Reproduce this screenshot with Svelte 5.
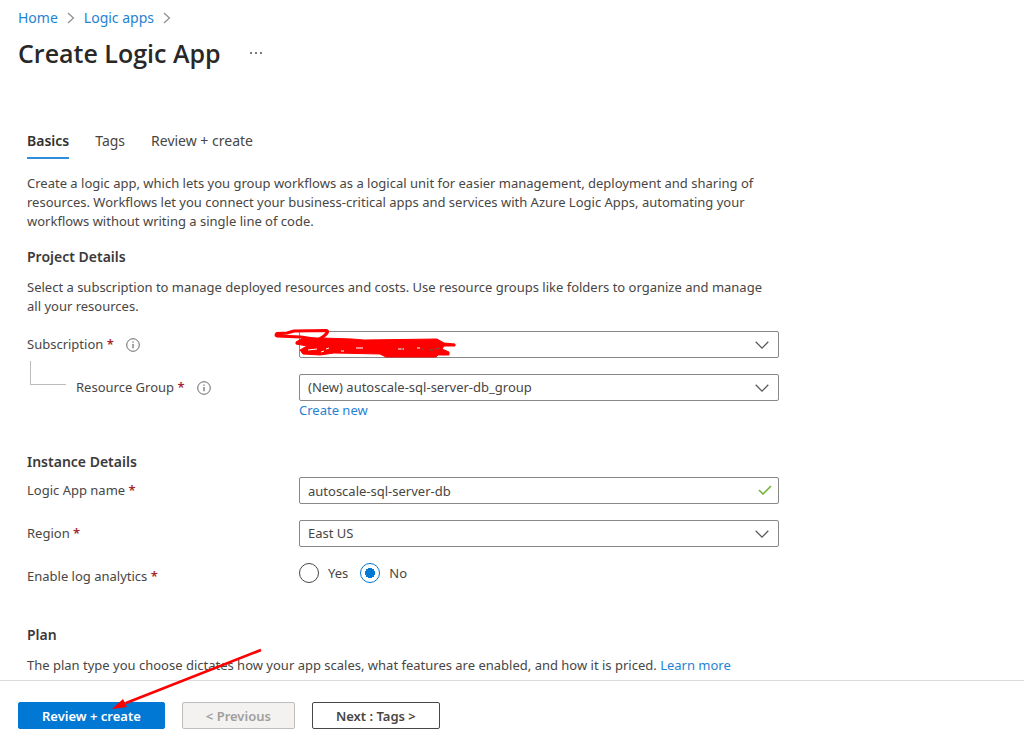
<script lang="ts">
  interface Field {
    id: string
    label: string
    options: string[]
  }

  const tabs = ['Basics', 'Tags', 'Review + create']
  const crumbs = ['Home', 'Logic apps']

  const subscription: Field = { id: 'subscription', label: 'Subscription', options: [''] }
  const group: Field = {
    id: 'resource-group',
    label: 'Resource Group',
    options: ['(New) autoscale-sql-server-db_group'],
  }
  const region: Field = { id: 'region', label: 'Region', options: ['East US'] }

  let activeTab = $state('Basics')
  let name = $state('autoscale-sql-server-db')
  let analytics = $state('No')
</script>

{#snippet info(label: string)}
  <button class="info" type="button" aria-label="About {label}">
    <svg viewBox="0 0 14 14" width="14" height="14" aria-hidden="true">
      <circle cx="7" cy="7" r="6.3" fill="none" stroke="currentColor" />
      <path d="M7 6v4.2M7 3.6v1.2" stroke="currentColor" stroke-width="1.2" />
    </svg>
  </button>
{/snippet}

{#snippet dropdown(field: Field)}
  <select id={field.id}>
    {#each field.options as option}
      <option>{option}</option>
    {/each}
  </select>
  <svg class="chevron" viewBox="0 0 14 8" width="14" height="8" aria-hidden="true">
    <path d="M.7.8 7 7.1 13.3.8" fill="none" stroke="#5c5a58" stroke-width="1.3" />
  </svg>
{/snippet}

<div class="page">
  <header>
    <nav class="crumbs" aria-label="Breadcrumb">
      {#each crumbs as crumb}
        <a href="#top">{crumb}</a>
        <svg viewBox="0 0 8 12" width="8" height="12" aria-hidden="true">
          <path d="M1 1l5.500 5L1 11" fill="none" stroke="#8a8886" stroke-width="1.1" />
        </svg>
      {/each}
    </nav>
    <div class="heading">
      <h1>Create Logic App</h1>
      <button class="more" type="button" aria-label="More actions">
        <svg viewBox="0 0 12 2" width="12" height="2" aria-hidden="true">
          <path d="M0 0h2v2H0zM5 0h2v2H5zM10 0h2v2h-2z" fill="#7a7876" />
        </svg>
      </button>
    </div>
  </header>

  <main>
    <div class="tabs" role="tablist">
      {#each tabs as tab}
        <button
          type="button"
          role="tab"
          aria-selected={tab === activeTab}
          class:active={tab === activeTab}
          onclick={() => (activeTab = tab)}
        >{tab}</button>
      {/each}
    </div>

    <p>
      Create a logic app, which lets you group workflows as a logical unit for easier management,
      deployment and sharing of resources. Workflows let you connect your business-critical apps and
      services with Azure Logic Apps, automating your workflows without writing a single line of code.
    </p>

    <section>
      <h2>Project Details</h2>
      <p>
        Select a subscription to manage deployed resources and costs. Use resource groups like folders
        to organize and manage all your resources.
      </p>
      <div class="fields">
        <div class="row">
          <div class="label">
            <label for={subscription.id}>{subscription.label} <b>*</b></label>
            {@render info(subscription.label)}
          </div>
          <div class="control">
            {@render dropdown(subscription)}
            <svg class="scribble" viewBox="0 0 182 32" width="182" height="32" aria-hidden="true">
              <path
                d="M46 12 27 9 3 8Q1 7 3 5.5L13 5 20 3 52 2.500Q56 3 50 8L44 12"
                fill="none" stroke="#fe0000" stroke-width="3" stroke-linejoin="round"
              />
              <path
                d="M22 14 29 10 48 10 78 11 90 12 163 11 170 15 181 16 181 18 170 18 168 21 175 24 175 27 164 27 162 29 112 29 106 26 60 25 46 27 29 26 26 22 33 18 22 16z"
                fill="#fe0000" stroke="#fe0000" stroke-linejoin="round"
              />
              <path d="M34 22l9-1M47 24l3-1M52 21l3-1M67 23h3M82 20h7M124 21h6M143 20h3" stroke="#fff" />
              <path d="M127 21h2M148 21h2M156 22h3M161 21l5-1" stroke="#605e5c" />
            </svg>
          </div>
        </div>
        <div class="row">
          <div class="label nested">
            <label for={group.id}>{group.label} <b>*</b></label>
            {@render info(group.label)}
          </div>
          <div class="control">
            {@render dropdown(group)}
            <a href="#create">Create new</a>
          </div>
        </div>
      </div>
    </section>

    <section class="instance">
      <h2>Instance Details</h2>
      <div class="fields">
        <div class="row">
          <div class="label"><label for="app-name">Logic App name <b>*</b></label></div>
          <div class="control">
            <input id="app-name" type="text" bind:value={name} />
            <svg class="check" viewBox="0 0 14 10" width="14" height="10" aria-hidden="true">
              <path d="M1 5l4 4L13 1" fill="none" stroke="#6bb12c" stroke-width="1.5" />
            </svg>
          </div>
        </div>
        <div class="row">
          <div class="label"><label for={region.id}>{region.label} <b>*</b></label></div>
          <div class="control">{@render dropdown(region)}</div>
        </div>
        <div class="row">
          <div class="label" id="analytics-label"><span>Enable log analytics <b>*</b></span></div>
          <div class="radios" role="radiogroup" aria-labelledby="analytics-label">
            {#each ['Yes', 'No'] as choice}
              <label>
                <input type="radio" name="analytics" value={choice} bind:group={analytics} />
                {choice}
              </label>
            {/each}
          </div>
        </div>
      </div>
    </section>

    <section class="plan">
      <h2>Plan</h2>
      <p>
        The plan type you choose dictates how your app scales, what features are enabled, and how it is
        priced. <a href="#learn">Learn more</a>
      </p>
    </section>
  </main>

  <footer>
    <button class="primary" type="button">Review + create</button>
    <button type="button" disabled>&lt; Previous</button>
    <button type="button">Next : Tags &gt;</button>
    <svg class="arrow" viewBox="0 0 150 62" width="150" height="62" aria-hidden="true">
      <path d="M149 2 14 55" fill="none" stroke="#fe0000" stroke-width="2.6" />
      <path d="M0 61 11 51 15 59z" fill="#fe0000" />
    </svg>
  </footer>
</div>

<style>
  :global(body) {
    margin: 0;
    background: #fff;
  }

  .page {
    display: flex;
    flex-direction: column;
    min-height: 100vh;
    font-family: 'Noto Sans', 'Open Sans', sans-serif;
    font-size: 13px;
    line-height: 19px;
    color: #484644;
  }

  button,
  input,
  select {
    font: inherit;
    color: inherit;
  }

  a {
    color: #1f83d3;
    text-decoration: none;
  }

  header {
    padding: 8px 18px 0;
  }

  .crumbs {
    display: flex;
    align-items: center;
    gap: 9px;
    font-size: 14px;
    line-height: 20px;
  }

  .heading {
    display: flex;
    align-items: center;
    gap: 29px;
    margin-top: 7px;
  }

  h1 {
    margin: 0;
    font-family: 'Open Sans', 'Noto Sans', sans-serif;
    font-size: 25px;
    line-height: 36px;
    font-weight: 600;
    color: #292827;
  }

  .more,
  .info {
    display: flex;
    padding: 0;
    border: 0;
    background: none;
  }

  .info {
    color: #6a6866;
  }

  main {
    max-width: 752px;
    padding: 60px 27px 0;
  }

  .tabs {
    display: flex;
    gap: 26px;
    margin-bottom: 15px;

    & button {
      padding: 0 0 6px;
      border: 0;
      border-bottom: 2px solid transparent;
      background: none;
      font-size: 14px;
      line-height: 20px;
    }

    & .active {
      border-color: #2f8fdb;
      font-weight: 600;
      color: #323130;
    }
  }

  p {
    margin: 0;
  }

  h2 {
    margin: 16px 0 11px;
    font-size: 14px;
    line-height: 20px;
    font-weight: 600;
    color: #3b3a39;
  }

  .fields {
    display: flex;
    flex-direction: column;
    gap: 16px;
  }

  p + .fields {
    margin-top: 15px;
  }

  .row {
    display: grid;
    grid-template-columns: 272px 1fr;
    min-height: 27px;
  }

  .label {
    display: flex;
    align-items: center;
    gap: 12px;
    height: 27px;

    & b {
      font-weight: 600;
      color: #a4262c;
    }
  }

  .nested {
    position: relative;
    padding-left: 49px;

    &::before {
      content: '';
      position: absolute;
      left: 3px;
      bottom: 16px;
      width: 36px;
      height: 24px;
      box-sizing: border-box;
      border: solid #bebcba;
      border-width: 0 0 1px 1px;
    }
  }

  .control {
    position: relative;
  }

  select,
  input[type='text'] {
    display: block;
    box-sizing: border-box;
    width: 100%;
    height: 27px;
    padding: 0 30px 0 8px;
    border: 1px solid #8a8886;
    border-radius: 2px;
    background: #fff;
    appearance: none;
  }

  .chevron,
  .check {
    position: absolute;
    right: 10px;
    top: 10px;
    pointer-events: none;
  }

  .check {
    right: 7px;
    top: 8px;
  }

  .scribble {
    position: absolute;
    left: -25px;
    top: -3px;
    pointer-events: none;
  }

  .instance h2 {
    margin: 32px 0 5px;
  }

  .radios {
    display: flex;
    align-items: flex-start;
    gap: 12px;

    & label {
      display: flex;
      align-items: center;
      gap: 9px;
    }

    & input {
      box-sizing: border-box;
      width: 20px;
      height: 20px;
      margin: 0;
      border: 1px solid #484644;
      border-radius: 50%;
      appearance: none;
    }

    & input:checked {
      border-color: #0078d4;
      background: radial-gradient(circle, #0078d4 5px, transparent 5px);
    }
  }

  .plan h2 {
    margin: 35px 0 11px;
  }

  footer {
    position: relative;
    display: flex;
    gap: 17px;
    margin-top: auto;
    padding: 21px 18px 19px;
    border-top: 1px solid #dddbd9;

    & button {
      height: 27px;
      padding: 0 23px;
      border: 1px solid #484644;
      border-radius: 2px;
      background: #fff;
      line-height: 20px;
      font-weight: 600;
    }

    & .primary {
      border-color: #0078d4;
      background: #0078d4;
      color: #fff;
    }

    & button:disabled {
      border-color: #c0bebc;
      background: #f3f2f1;
      color: #a19f9d;
    }
  }

  .arrow {
    position: absolute;
    left: 112px;
    bottom: 38px;
    pointer-events: none;
  }
</style>
